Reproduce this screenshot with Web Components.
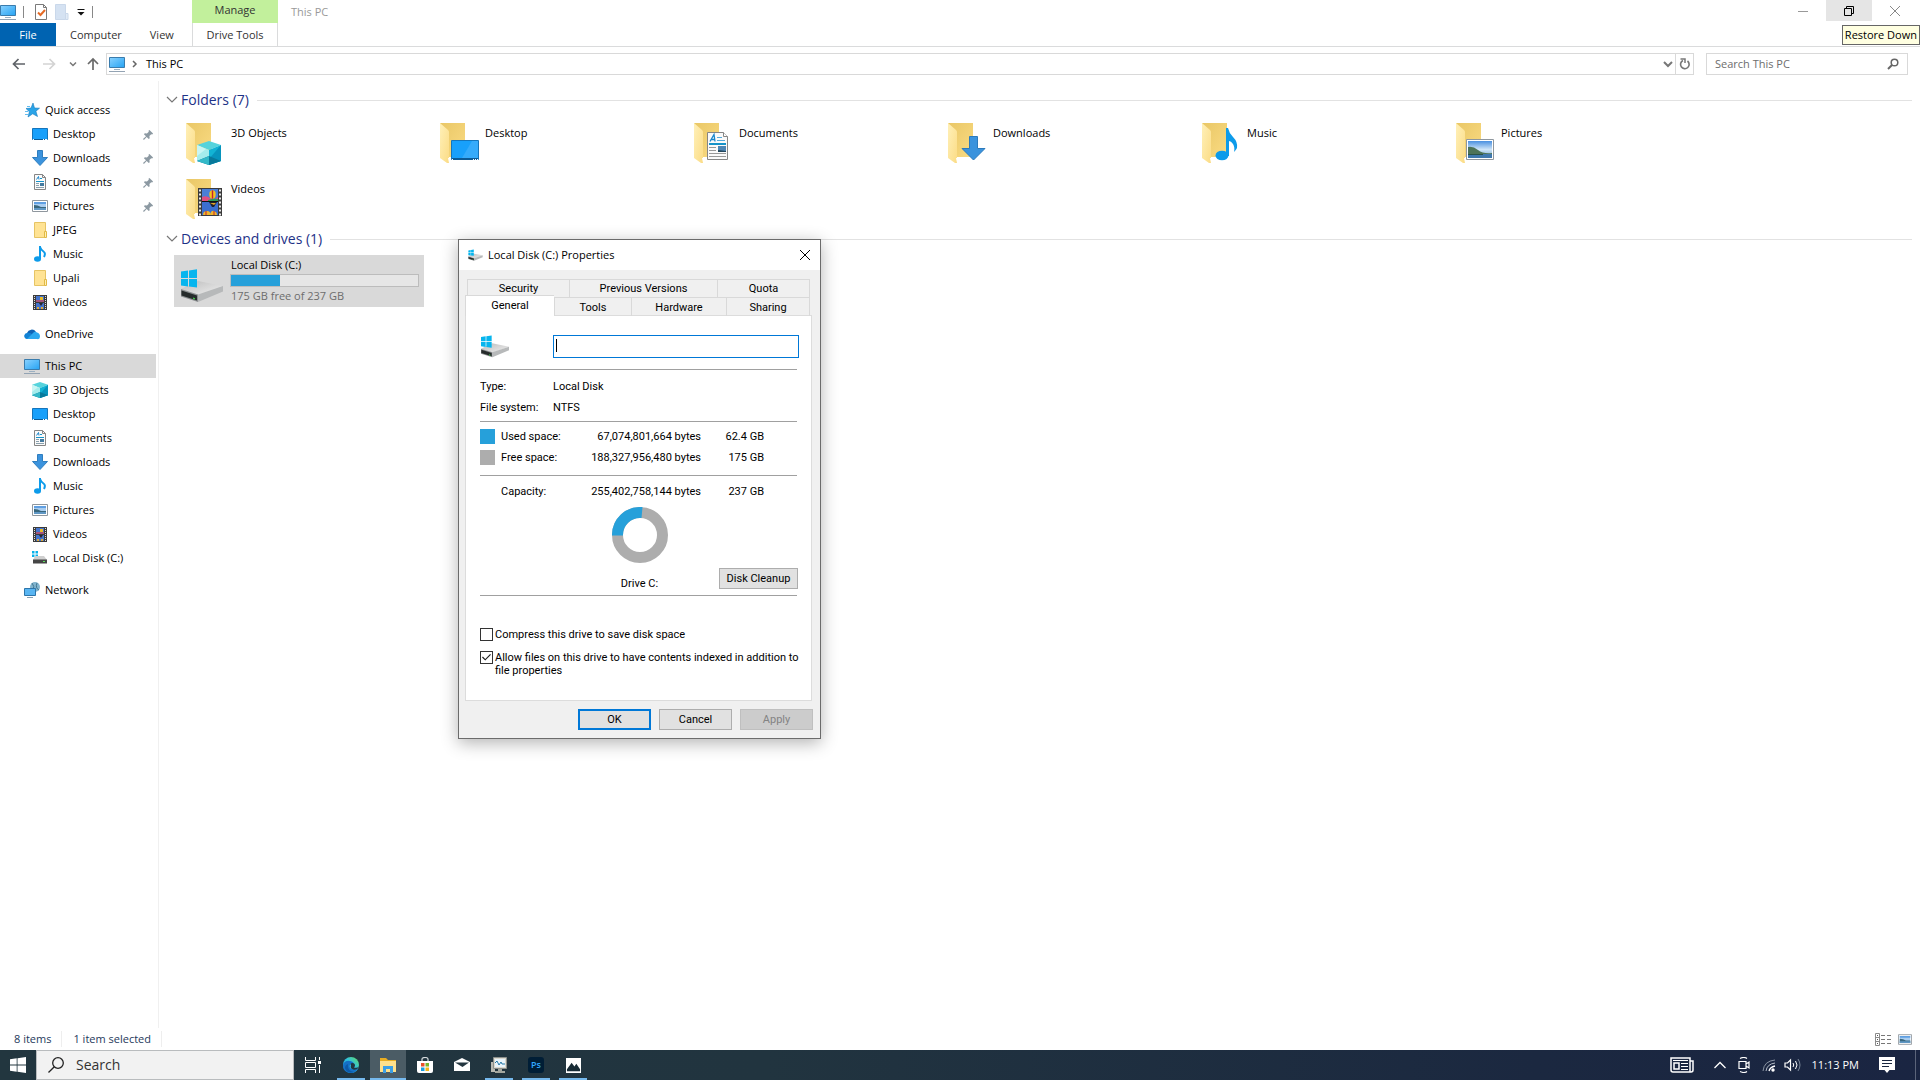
<!DOCTYPE html>
<html lang="en">
<head>
<meta charset="utf-8">
<title>This PC</title>
<style>
    html, body {
        margin: 0;
        min-height: 100vh;
    }

    body {
        display: flex;
        flex-direction: column;
        position: relative;
        background: #fff;
        color: #000;
        font: 11px/16px "Open Sans", "Noto Sans", sans-serif;
    }

    explorer-window {
        flex: 1;
    }

    /* the dialog floats over the desktop */
    properties-dialog {
        position: absolute;
        left: 458px;
        top: 239px;
    }
</style>
</head>
<body>

<explorer-window>
    <nav-pane slot="nav">
        <nav-item icon="star" label="Quick access" root></nav-item>
        <nav-item icon="desktop" label="Desktop" pinned></nav-item>
        <nav-item icon="download" label="Downloads" pinned></nav-item>
        <nav-item icon="document" label="Documents" pinned></nav-item>
        <nav-item icon="picture" label="Pictures" pinned></nav-item>
        <nav-item icon="folder" label="JPEG"></nav-item>
        <nav-item icon="music" label="Music"></nav-item>
        <nav-item icon="folder" label="Upali"></nav-item>
        <nav-item icon="video" label="Videos"></nav-item>
        <nav-item icon="cloud" label="OneDrive" root spaced></nav-item>
        <nav-item icon="pc" label="This PC" root spaced selected></nav-item>
        <nav-item icon="cube" label="3D Objects"></nav-item>
        <nav-item icon="desktop" label="Desktop"></nav-item>
        <nav-item icon="document" label="Documents"></nav-item>
        <nav-item icon="download" label="Downloads"></nav-item>
        <nav-item icon="music" label="Music"></nav-item>
        <nav-item icon="picture" label="Pictures"></nav-item>
        <nav-item icon="video" label="Videos"></nav-item>
        <nav-item icon="disk" label="Local Disk (C:)"></nav-item>
        <nav-item icon="network" label="Network" root spaced></nav-item>
    </nav-pane>

    <tile-group label="Folders (7)">
        <folder-tile icon="big-cube" label="3D Objects"></folder-tile>
        <folder-tile icon="big-desktop" label="Desktop"></folder-tile>
        <folder-tile icon="big-document" label="Documents"></folder-tile>
        <folder-tile icon="big-download" label="Downloads"></folder-tile>
        <folder-tile icon="big-music" label="Music"></folder-tile>
        <folder-tile icon="big-picture" label="Pictures"></folder-tile>
        <folder-tile icon="big-video" label="Videos"></folder-tile>
    </tile-group>
    <tile-group label="Devices and drives (1)">
        <drive-tile label="Local Disk (C:)" free="175 GB free of 237 GB"></drive-tile>
    </tile-group>
</explorer-window>

<task-bar></task-bar>

<properties-dialog label="Local Disk (C:) Properties"></properties-dialog>

<script>
// Folder body shared by all the large tile icons
const folderBack = `
    <linearGradient id="fb" x1="0" y1="0" x2="1" y2="1"><stop offset="0" stop-color="#e9c766"/><stop offset="1" stop-color="#fadb83"/></linearGradient>
    <linearGradient id="ff" x1="0" y1="0" x2="1" y2="1"><stop offset="0" stop-color="#fff0b8"/><stop offset="1" stop-color="#fbdc86"/></linearGradient>
    <path d="M2 2h25v34H10z" fill="url(#fb)"/>
    <path d="M2 2l8 7q1 1 1 2v31l-2 0-7-5z" fill="url(#ff)"/>
    <path d="M10 37h5l-4 5z" fill="#fff"/>`;

const cube = `
    <path d="M0 4L12 0l12 4-12 5z" fill="#56d3dc"/>
    <path d="M0 4l12 5v15L0 20z" fill="#a5ecec"/>
    <path d="M0 4l9 4L0 15z" fill="#c9f6f4"/>
    <path d="M24 4L12 9v15l12-4z" fill="#12b3d4"/>
    <path d="M24 4L12 18v6l12-4z" fill="#0794bd"/>
    <path d="M0 20l12-5 12 5-12 4z" fill="#08799b"/>
    <path d="M0 20l12-5v9z" fill="#34b9c8"/>`;

const film = `
    <path d="M0 0h24v28H0z" fill="#3b3b3b"/>
    <path d="M2 1.500v26M22 1.500v26" stroke="#e8e8e8" stroke-width="2" stroke-dasharray="2 2"/>
    <path d="M4 1h16v12H4z" fill="#4b7fd6"/>
    <path d="M4 9q4-2 8 1t8-1v4H4z" fill="#e0507f"/>
    <path d="M10 12q6-2 10-1v2H10z" fill="#2f9a5a"/>
    <path d="M4 14h16v13H4z" fill="#3b6fd0"/>
    <ellipse cx="14.500" cy="6.500" rx="3.200" ry="4.200" fill="#f6c21c"/>
    <path d="M14.500 2.300v8.400" stroke="#c42331" stroke-width="1.400"/>
    <path d="M11 14h8l-3 5h-2z" fill="#20202a"/>
    <path d="M12 15h6l-2 2z" fill="#e2a728"/>
    <path d="M5 27q0-4 4-4t3 4zM12 27q1-5 4-4t3 4z" fill="#f0b52b"/>
    <path d="M8 27v-4M16 27v-4" stroke="#c42331"/>
    <path d="M4 13.500h16" stroke="#111"/>`;

const photo = `
    <linearGradient id="sky" x1="0" y1="0" x2="0" y2="1"><stop offset="0" stop-color="#4a90e0"/><stop offset=".5" stop-color="#cfe5f8"/><stop offset="1" stop-color="#6ea3cf"/></linearGradient>
    <path d="M.5.5h27v20H.5z" fill="#fff" stroke="#8f979e"/>
    <path d="M2 2h24v17H2z" fill="url(#sky)"/>
    <path d="M2 8q5-1 10 3t14 3v1H2z" fill="#4d7358"/>
    <path d="M2 15h24v4H2z" fill="#3f78ad"/>
    <path d="M2 15h15v1H2z" fill="#2a5247"/>`;

const page = `
    <path d="M.5.500h16l4 4v23H.5z" fill="#fafafa" stroke="#858585"/>
    <path d="M16.500.5v4h4" fill="#fff" stroke="#858585"/>
    <path d="M3 9.500l4-7 1 7M4.500 7.500h3" fill="none" stroke="#1a86cc" stroke-width="1.300"/>
    <path d="M10 5.500h5M10 8.500h8" stroke="#54aadb"/>
    <path d="M2 12h17" stroke="#1593c9" stroke-width="2"/>
    <path d="M2 15.500h7M2 18.500h7M2 21.500h17M2 24.500h17" stroke="#999"/>
    <path d="M11 14h8v6h-8z" fill="#4d86b5"/><path d="M11 18l8 1v1h-8z" fill="#23465b"/>`;

const drive = `
    <linearGradient id="dt" x1="0" y1="0" x2="1" y2="1"><stop offset="0" stop-color="#bcbcbc"/><stop offset="1" stop-color="#f0f0f0"/></linearGradient>
    <path d="M3 34l17-8 25 5-25 9z" fill="url(#dt)"/>
    <path d="M20 39.500L45 31v5.500L20 47z" fill="#b7b9ba"/>
    <path d="M3 34l17 5.500V47L3 41.500z" fill="#8b8e90"/>
    <path d="M3.500 35.500l15.500 5v5L3.500 40.500z" fill="#262b2b"/>
    <path d="M15 42.500l2 .7v1.300l-2-.7z" fill="#41d34b"/>
    <path d="M3 16.500l7-1v7.500H3zM11 15.400l8-1.200V23h-8zM3 24h7v7.500l-7-1zM11 24h8v8.500l-8-1z" fill="#06b5ee"/>`;

const monitor = `
    <linearGradient id="mn" x1="0" y1="0" x2="1" y2="1"><stop offset="0" stop-color="#8ad2ff"/><stop offset="1" stop-color="#25a3f3"/></linearGradient>
    <path d="M.5 1.500h15v10H.5z" fill="url(#mn)" stroke="#3a7cad"/>
    <path d="M5 13.500h6" stroke="#9bb0c2"/>
    <path d="M0 15.500h16" stroke="#93a3b3"/>`;

const smallPhoto = `
    <path d="M.5.500h15v11H.5z" fill="#fff" stroke="#8f979e"/>
    <path d="M2 2h12v8H2z" fill="#a9cdf0"/>
    <path d="M2 2h12v2H2z" fill="#5f9fe2"/>
    <path d="M2 5q4 0 7 2h5v3H2z" fill="#39677d"/>
    <path d="M2 8h12v2H2z" fill="#5f97c4"/>`;

const detailsView = '<path d="M.5.500h4v12h-4zM.5 4.500h4M.5 8.500h4" fill="none" stroke="#8b8b8b"/><path d="M2 2h1v1H2zM2 6h1v1H2zM2 10h1v1H2z" fill="#555"/><path d="M6 2.500h4M12 2.500h4M6 6.500h4M12 6.500h4M6 10.500h4M12 10.500h4" stroke="#777"/>';

// name: [viewBox, markup]
const icons = {
    'pc': ['0 0 16 16', monitor],
    'star': ['0 0 16 16', '<path d="M9 1l1.500 5 5 .2-3.600 3 1.600 5.300-4.800-2.700L4 15l1.400-5.200L2 6.500l5-.4z" fill="#2aa4e8" stroke="#187bbd" stroke-width=".6"/><path d="M3 4.500h3M1 9.500h3M1 12.500h3" stroke="#63bdf0"/>'],
    'desktop': ['0 0 16 16', '<path d="M.5 2.500h15v11H.5z" fill="#18a0fb" stroke="#1575bb"/><path d="M1 13.500h14" stroke="#0b5b97"/><path d="M1 13.500h1M11 13.500h1M13 13.500h2" stroke="#fff"/>'],
    'download': ['0 0 16 16', '<path d="M5.500.5h5v7h5L8 15.500.5 7.500h5z" fill="#3b93dd" stroke="#2f7ebf"/>'],
    'document': ['0 0 16 16', '<path d="M2.500.5h8l3 3v12h-11z" fill="#fafafa" stroke="#858585"/><path d="M10.500.5v3h3" fill="none" stroke="#858585"/><path d="M4.500 5.500l2-3 .5 3" fill="none" stroke="#1a86cc"/><path d="M8 4.500h2M4 7.500h8" stroke="#1593c9"/><path d="M4 9.500h3M4 11.500h3M4 13.500h8" stroke="#8aa0ad"/><path d="M8 9h4v3H8z" fill="#447a9f"/>'],
    'picture': ['0 -2 16 16', smallPhoto],
    'folder': ['0 0 16 16', '<path d="M2.500.5h11v15h-11z" fill="#ffe394" stroke="#e6c464"/><path d="M12.500 9.500h2v6h-2z" fill="#fff0b5" stroke="#e1b946"/>'],
    'music': ['0 0 16 16', '<ellipse cx="5.500" cy="13" rx="3.500" ry="2.700" fill="#0d9bea"/><path d="M8 13V0M8 1q1 3 3.500 4.500T12 11" fill="none" stroke="#0d9bea" stroke-width="2"/>'],
    'video': ['0 0 16 16', '<path d="M1 1h14v15H1z" fill="#3b3b3b"/><path d="M2.500 2v14M13.500 2v14" stroke="#ddd" stroke-dasharray="1 1"/><path d="M4 2h8v6H4zM4 9h8v6H4z" fill="#4574cb"/><path d="M4 6h8v2H4z" fill="#a2557d"/><path d="M8 3h3v3H8z" fill="#e8bb2a"/><path d="M7 9h4l-2 3z" fill="#25252d"/><path d="M5 13h2v2H5zM9 13h2v2H9z" fill="#dba83a"/>'],
    'cube': ['0 0 24 24', cube],
    'cloud': ['0 0 16 16', '<path d="M3 7a5 5 0 0 1 9-1l-4 5H3z" fill="#0f63b5"/><path d="M1 12A3 3 0 0 1 3 7q3-1 6 2l4 4H3q-1.500 0-2-1z" fill="#1282d4"/><path d="M9 7q2-2 4-.5 3 .8 3 4t-3 2.500H3z" fill="#2ba8ef"/>'],
    'disk': ['0 0 16 16', '<path d="M0 1h2.500v2.500H0zM3.500 1H6v2.500H3.500zM0 4.500h2.500V7H0zM3.500 4.500H6V7H3.500z" fill="#08b1ea"/><path d="M3 6h9l3 4H1z" fill="#cfcfcf"/><path d="M1 9.500h14v4H1z" fill="#454545"/><path d="M11 11h2v1h-2z" fill="#5be25b"/>'],
    'network': ['0 0 16 16', '<circle cx="11" cy="5" r="5" fill="#82b4ce"/><path d="M8 1q3 3 1 8M13 1q-2 5 2 7" fill="none" stroke="#417790"/><path d="M.5 6.500h11v7H.5z" fill="#58b5f2" stroke="#2d75aa"/><path d="M3 15.500h6" stroke="#87a0b3"/>'],
    'pin': ['0 0 12 12', '<path d="M7 1l4 4-1 1-1-.3-2 2 .3 2.300-1 1-2.300-2.300L1 12 0 11l3.300-3L1 5.700l1-1 2.300.3 2-2L6 2z" fill="#8c99a2"/>'],

    'big-cube': ['-6 -5 52 52', folderBack + `<g transform="translate(13 20)">${cube}</g>`],
    'big-desktop': ['-6 -5 52 52', folderBack + '<path d="M13.500 19.500h27v19h-27z" fill="#18a0fb" stroke="#1575bb"/><path d="M14 38h26" stroke="#0b5b97" stroke-width="2"/><path d="M24 37l10-17h6v17z" fill="#35abfb"/><path d="M14 38.500h1M35 38.500h1M37 38.500h1M39 38.500h1" stroke="#fff"/>'],
    'big-document': ['-6 -5 52 52', folderBack + `<g transform="translate(15 11)">${page}</g>`],
    'big-download': ['-6 -5 52 52', folderBack + '<path d="M23.500 15.500h8v12h7.500L27.500 39 16 27.500h7.500z" fill="#3b93dd" stroke="#2b7abc"/>'],
    'big-music': ['-6 -5 52 52', folderBack + '<ellipse cx="22" cy="34.500" rx="6.500" ry="4.800" fill="#0d9bea"/><path d="M26 7h2q1 5 5 9 5 5 4 11-1 2-3 4 1-5-1-8-2-3-4-3v15h-3z" fill="#0d9bea"/>'],
    'big-picture': ['-6 -5 52 52', folderBack + `<g transform="translate(12 18)">${photo}</g>`],
    'big-video': ['-6 -5 52 52', folderBack + `<g transform="translate(14 11)">${film}</g>`],
    'big-drive': ['0 0 52 52', drive],
    'drive': ['2 12 44 36', drive],

    'qat-check': ['0 0 12 16', '<path d="M.5.500h8l3 3v12H.5z" fill="#fff" stroke="#7a7a7a"/><path d="M8.500.5v3h3" fill="none" stroke="#7a7a7a"/><path d="M3 8.500l2.500 2.500L10 6" fill="none" stroke="#e56a25" stroke-width="2"/>'],
    'qat-folder': ['0 0 14 16', '<path d="M.5.500h10v15H.5z" fill="#d5e2f2" stroke="#cad8ea"/><path d="M10.500 9.500h2.500v6h-2.500z" fill="#e2ebf6" stroke="#cad8ea"/>'],
    'qat-more': ['0 0 8 8', '<path d="M.5 1.500h7" stroke="#111"/><path d="M.5 4h7L4 7.500z" fill="#111"/>'],
    'back': ['0 0 14 12', '<path d="M13 6H2M6.500 1L1.500 6l5 5" fill="none" stroke="#5f6368" stroke-width="1.700"/>'],
    'forward': ['0 0 14 12', '<path d="M1 6h11M7.500 1l5 5-5 5" fill="none" stroke="#d3d3d3" stroke-width="1.700"/>'],
    'up': ['0 0 12 14', '<path d="M6 13V2M1 7l5-5 5 5" fill="none" stroke="#6a6a6a" stroke-width="1.700"/>'],
    'small-down': ['0 0 8 6', '<path d="M1 1.500l3 3 3-3" fill="none" stroke="#777" stroke-width="1.500"/>'],
    'crumb': ['0 0 6 8', '<path d="M1 1l3 3-3 3" fill="none" stroke="#666" stroke-width="1.500"/>'],
    'box-down': ['0 0 10 8', '<path d="M1 2l4 4 4-4" fill="none" stroke="#777" stroke-width="2"/>'],
    'refresh': ['0 0 12 12', '<path d="M4 2.500A4.300 4.300 0 1 0 8.500 3" fill="none" stroke="#777" stroke-width="1.600"/><path d="M1.500 1H6v4" fill="none" stroke="#777" stroke-width="1.500"/>'],
    'find': ['0 0 12 12', '<circle cx="7.500" cy="4.500" r="3.300" fill="none" stroke="#666" stroke-width="1.500"/><path d="M5 7l-4 4" stroke="#666" stroke-width="2"/>'],
    'group-down': ['0 0 12 8', '<path d="M1 1l5 5 5-5" fill="none" stroke="#777" stroke-width="1.200"/>'],
    'minimize': ['0 0 10 10', '<path d="M0 5.500h10" stroke="#999"/>'],
    'restore': ['0 0 10 10', '<path d="M.5 2.500h7v7h-7zM2.500 2.500v-2h7v7h-2" fill="none" stroke="#000"/>'],
    'close': ['0 0 10 10', '<path d="M0 0l10 10M10 0L0 10" stroke="currentColor"/>'],
    'details-view': ['0 0 17 13', detailsView],
    'tiles-view': ['0 0 16 12', smallPhoto],

    'windows': ['0 0 16 16', '<path d="M0 2.300l6.700-1v6.300H0zM7.500 1.200L16 0v7.600H7.500zM0 8.400h6.700v6.300l-6.700-1zM7.500 8.400H16V16l-8.500-1.200z" fill="#fff"/>'],
    'search': ['0 0 16 16', '<circle cx="10" cy="6" r="5.300" fill="none" stroke="#222" stroke-width="1.300"/><path d="M6.300 9.700L.5 15.500" stroke="#222" stroke-width="1.300"/>'],
    'task-view': ['0 0 16 16', '<path d="M.5 0v3.500h10V0M.5 16v-3.500h10V16M.5 5.500h10v5H.5zM14.500 0v3M14.500 8v8" fill="none" stroke="#fff"/><path d="M13 4h3v3h-3z" fill="#fff"/>'],
    'edge': ['0 0 16 16', '<linearGradient id="eg" x1="0" y1="1" x2="1" y2="0"><stop offset="0" stop-color="#1683d8"/><stop offset=".55" stop-color="#2fc2df"/><stop offset="1" stop-color="#65df63"/></linearGradient><circle cx="8" cy="8" r="8" fill="url(#eg)"/><path d="M0 8q2-5 7-4 4 .5 4 4-4-2-4.500 1 0 3 4 3.500 3 0 5-1.500-3 5-8 5-8-1-7.500-8z" fill="#1570c6"/><path d="M5 7q-1 7 6 8-7 2-9-4 0-3 3-4z" fill="#0d5aa7"/><path d="M8 8q-1-2 1.500-2T12 8.500q0 1-1 2 3 1 5-1-2 4-6 3-3-1-2-4.500z" fill="#233640"/>'],
    'explorer': ['0 0 16 16', '<path d="M0 1h6l2 2h8v12H0z" fill="#e9ad22"/><path d="M0 4h16v11H0z" fill="#ffe08b"/><path d="M3 16V9h10v7h-3v-4H6v4z" fill="#3c9fe5"/>'],
    'store': ['0 0 16 16', '<path d="M5 5V2q0-1.500 3-1.500T11 2v3" fill="none" stroke="#d7dcdf" stroke-width="1.200"/><path d="M0 4h16v10q0 2-2 2H2q-2 0-2-2z" fill="#fff"/><path d="M4 6h3.500v3.500H4z" fill="#e9502b"/><path d="M8.500 6H12v3.500H8.500z" fill="#78b62b"/><path d="M4 10.500h3.500V14H4z" fill="#1ba0e1"/><path d="M8.500 10.500H12V14H8.500z" fill="#f5b61b"/>'],
    'mail': ['0 0 16 16', '<path d="M0 5l8-4 8 4v9H0z" fill="#fff"/><path d="M1 5.500h14L8.500 10z" fill="#233640"/>'],
    'monitor-app': ['0 0 16 16', '<path d="M0 5h4v10H0z" fill="#b9bab2"/><path d="M2.500.5h13v11h-13z" fill="#dbdad0" stroke="#8d908c"/><path d="M4 2h10v8H4z" fill="#eaf5fb"/><path d="M4 6l2-2 2 4 2-3 1 2h3" fill="none" stroke="#2478a8"/><path d="M7 12h4v2H7zM4 14h10v2H4z" fill="#a4a79f"/>'],
    'photos': ['0 0 16 16', '<path d="M0 0h16v16H0z" fill="#fff"/><path d="M1 12l5-7 3 4 2-3 4 6v2H1z" fill="#172b35"/>'],
    'news': ['0 0 24 16', '<path d="M1 1h19v14H3q-2 0-2-2zM20 4h3v9q0 2-2 2h-2" fill="none" stroke="#fff" stroke-width="1.500"/><path d="M4 6h5v6H4z" fill="none" stroke="#fff" stroke-width="1.500"/><path d="M3 3.500h15M11 6.500h7M11 9.500h7M11 12.500h7" stroke="#fff"/>'],
    'tray-up': ['0 0 12 8', '<path d="M.5 7L6 1.500 11.500 7" fill="none" stroke="#fff" stroke-width="1.300"/>'],
    'meet': ['0 0 12 16', '<path d="M1 4.500h7v7H1zM8 7l3-2v6L8 9M2 1.500q4-2 7 0M2 14.500q4 2 7 0" fill="none" stroke="#fff" stroke-width="1.200"/>'],
    'wifi': ['0 0 14 14', '<path d="M1 13Q2 3 13 2" fill="none" stroke="#8c96a5"/><path d="M4 13q1-7 9-8" fill="none" stroke="#b6bdc8"/><path d="M7 13q1-4 6-5" fill="none" stroke="#fff" stroke-width="1.300"/><circle cx="11" cy="12" r="1.700" fill="#fff"/>'],
    'sound': ['0 0 18 14', '<path d="M1 5h2.500l3-3v10l-3-3H1z" fill="none" stroke="#fff" stroke-width="1.200"/><path d="M9 5q1.500 2 0 4M11.500 3q3 4 0 8" fill="none" stroke="#fff"/><path d="M14 1q4 6 0 12" fill="none" stroke="#7a879a"/>'],
    'notes': ['0 0 16 16', '<path d="M0 0h16v13h-5.500L8 16l-2.500-3H0z" fill="#fff"/><path d="M3 3.500h10M3 6.500h10M3 9.500h7" stroke="#1b2840"/>']
};

const icon = (name, width, height = width) =>
    `<svg class="icon-${name}" width="${width}" height="${height}" viewBox="${icons[name][0]}" aria-hidden="true">${icons[name][1]}</svg>`;

const baseStyle = `
    * { box-sizing: border-box; }
    svg { display: block; flex: none; }
    button, input { font: inherit; color: inherit; margin: 0; border-radius: 0; }
    button { border: 0; padding: 0; background: none; }
    a { color: inherit; text-decoration: none; }
`;

class BaseElement extends HTMLElement {
    constructor() {
        super();
        this.attachShadow({ mode: 'open' });
    }

    connectedCallback() {
        this.shadowRoot.innerHTML = `<style>${baseStyle}${this.styles()}</style>${this.render()}`;
    }
}

// Window frame: title bar, ribbon tabs, address bar, panes, status bar
class ExplorerWindow extends BaseElement {
    styles() {
        return `
            :host { display: flex; flex-direction: column; position: relative; }
            header { display: flex; height: 46px; border-bottom: 1px solid #dadbdc; box-sizing: content-box; }
            .left { width: 192px; }
            .quick { display: flex; align-items: center; height: 23px; }
            .quick i { width: 1px; height: 12px; margin-left: 7px; background: #888; }
            .quick button { margin-left: 8px; }
            .quick button:first-child { margin-left: 0; }
            .quick i + button { margin-left: 11px; }
            .ribbon { display: flex; height: 23px; color: #333; }
            .ribbon button { padding: 0 14px; }
            .ribbon .file { width: 56px; background: #0063b1; color: #fff; }
            .context { width: 86px; color: #333; }
            .context span, .context button { display: block; width: 100%; height: 23px; line-height: 22px; text-align: center; }
            .context span { background: #c2f09c; line-height: 20px; }
            .context button { border: solid #dadbdc; border-width: 0 1px; }
            h1 { flex: 1; margin: 0; padding: 4px 13px; font: inherit; color: #999; }
            .controls { display: flex; margin-right: 2px; }
            .controls button { display: grid; place-items: center; width: 46px; height: 21px; color: #888; }
            .controls .hot { background: #e5e5e5; }
            .tip { position: absolute; right: 0; top: 25px; padding: 1px 2px; border: 1px solid #666; background: #ffffe1; white-space: nowrap; }
            .address { display: flex; align-items: center; height: 34px; padding-right: 12px; }
            .moves { display: flex; align-items: center; width: 106px; padding-left: 12px; }
            .moves button + button { margin-left: 16px; }
            .moves button:nth-child(3) { margin-left: 13px; }
            .moves button:nth-child(4) { margin-left: 10px; }
            .path { display: flex; flex: 1; align-items: center; height: 22px; padding-left: 2px; border: 1px solid #d9d9d9; }
            .icon-crumb { margin: 0 8px 0 7px; }
            .path a { flex: 1; }
            .path > button:last-child { display: grid; place-items: center; width: 18px; height: 20px; margin-left: 2px; border-left: 1px solid #d9d9d9; }
            .find { display: flex; align-items: center; width: 202px; height: 22px; margin-left: 12px; padding: 0 8px; border: 1px solid #d9d9d9; }
            .find input { flex: 1; min-width: 0; padding: 0; border: 0; outline: 0; background: none; }
            .find input::placeholder { color: #6d6d6d; opacity: 1; }
            .panes { display: flex; flex: 1; }
            ::slotted(nav-pane) { width: 159px; flex: none; }
            main { flex: 1; min-width: 0; padding: 8px 8px 0 7px; }
            footer { display: flex; align-items: center; height: 22px; padding: 0 8px 0 14px; color: #1e395b; }
            footer span { padding-right: 10px; margin-right: 11px; border-right: 1px solid #eee; }
            footer div { flex: 1; }
            footer button + button { margin-left: 6px; }
        `;
    }

    render() {
        return `
            <header>
                <div class="left">
                    <div class="quick">
                        <button aria-label="This PC">${icon('pc', 16)}</button><i></i>
                        <button aria-label="Properties">${icon('qat-check', 12, 16)}</button>
                        <button aria-label="New folder">${icon('qat-folder', 14, 16)}</button>
                        <button aria-label="Customize">${icon('qat-more', 8)}</button><i></i>
                    </div>
                    <div class="ribbon">
                        <button class="file">File</button>
                        <button>Computer</button>
                        <button>View</button>
                    </div>
                </div>
                <div class="context"><span>Manage</span><button>Drive Tools</button></div>
                <h1>This PC</h1>
                <div class="controls">
                    <button aria-label="Minimize">${icon('minimize', 10)}</button>
                    <button class="hot" aria-label="Restore">${icon('restore', 10)}</button>
                    <button aria-label="Close">${icon('close', 10)}</button>
                </div>
            </header>
            <div class="tip" role="tooltip">Restore Down</div>
            <div class="address">
                <div class="moves">
                    <button aria-label="Back">${icon('back', 14, 12)}</button>
                    <button aria-label="Forward">${icon('forward', 14, 12)}</button>
                    <button aria-label="Recent">${icon('small-down', 8, 6)}</button>
                    <button aria-label="Up">${icon('up', 12, 14)}</button>
                </div>
                <div class="path">
                    ${icon('pc', 16)}${icon('crumb', 6, 8)}<a href="#this-pc">This PC</a>
                    <button aria-label="Previous locations">${icon('box-down', 10, 8)}</button>
                    <button aria-label="Refresh">${icon('refresh', 12)}</button>
                </div>
                <label class="find"><input type="text" placeholder="Search This PC" aria-label="Search This PC">${icon('find', 12)}</label>
            </div>
            <div class="panes">
                <slot name="nav"></slot>
                <main><slot></slot></main>
            </div>
            <footer>
                <span>8 items</span><span>1 item selected</span><div></div>
                <button aria-label="Details view">${icon('details-view', 17, 13)}</button>
                <button aria-label="Tiles view">${icon('tiles-view', 14, 11)}</button>
            </footer>
        `;
    }
}

class NavPane extends BaseElement {
    styles() {
        return `
            :host { display: block; padding: 17px 2px 0 0; border-right: 1px solid #f0f0f0; box-sizing: border-box; }
        `;
    }

    render() {
        return '<nav aria-label="Folders"><slot></slot></nav>';
    }
}

class NavItem extends BaseElement {
    styles() {
        return `
            :host { display: block; }
            :host([spaced]) { margin-top: 8px; }
            :host([selected]) { background: #d9d9d9; }
            a { display: flex; align-items: center; height: 24px; padding: 0 2px 0 32px; gap: 5px; }
            :host([root]) a { padding-left: 24px; }
            span { flex: 1; }
        `;
    }

    render() {
        const pin = this.hasAttribute('pinned') ? icon('pin', 11) : '';
        return `<a href="#">${icon(this.getAttribute('icon'), 16)}<span>${this.getAttribute('label')}</span>${pin}</a>`;
    }
}

class TileGroup extends BaseElement {
    styles() {
        return `
            :host { display: block; margin-bottom: 4px; }
            h2 { display: flex; align-items: center; margin: 0 0 5px; font-size: 14px; line-height: 22px; font-weight: 400; color: #1e3287; }
            h2 svg { margin-right: 3px; }
            h2::after { content: ""; flex: 1; height: 1px; margin-left: 8px; background: #e2e2e2; }
            .tiles { display: grid; grid-template-columns: repeat(auto-fill, 250px); gap: 4px; padding-left: 8px; }
        `;
    }

    render() {
        return `
            <h2>${icon('group-down', 12, 8)}${this.getAttribute('label')}</h2>
            <div class="tiles"><slot></slot></div>
        `;
    }
}

class FolderTile extends BaseElement {
    styles() {
        return `
            :host { display: block; }
            a { display: flex; height: 52px; padding-left: 4px; }
            span { padding: 9px 0 0 1px; }
        `;
    }

    render() {
        return `<a href="#">${icon(this.getAttribute('icon'), 52)}<span>${this.getAttribute('label')}</span></a>`;
    }
}

class DriveTile extends BaseElement {
    styles() {
        return `
            :host { display: block; background: #d9d9d9; }
            a { display: flex; height: 52px; padding: 0 5px 0 4px; }
            .info { flex: 1; padding-top: 2px; }
            .info span { display: block; padding-left: 1px; }
            .bar { height: 13px; margin: 1px 0; border: 1px solid #bcbcbc; background: #e6e6e6; }
            .bar i { display: block; width: 26%; height: 100%; background: #26a0da; }
            .free { color: #6d6d6d; }
        `;
    }

    render() {
        return `
            <a href="#">${icon('big-drive', 52)}
                <div class="info">
                    <span>${this.getAttribute('label')}</span>
                    <div class="bar"><i></i></div>
                    <span class="free">${this.getAttribute('free')}</span>
                </div>
            </a>
        `;
    }
}

class PropertiesDialog extends BaseElement {
    styles() {
        return `
            :host {
                display: block; width: 363px; box-sizing: border-box; border: 1px solid #6b6b6b; background: #f0f0f0;
                box-shadow: 0 4px 16px rgba(0, 0, 0, .3);
            }
            .title { display: flex; align-items: center; height: 30px; padding: 0 10px 0 9px; background: #fff; }
            .title h2 { flex: 1; margin: 0 0 0 5px; font: inherit; }
            .body { padding: 9px 7px 8px 6px; font: 11px/13px Roboto, "Liberation Sans", sans-serif; }
            .tabs { display: grid; height: 18px; margin: 0 3px 0 2px; }
            .tabs button { border: solid #d9d9d9; border-width: 1px 0 0 1px; }
            .tabs button:last-child { border-right-width: 1px; }
            .first { grid-template-columns: 102fr 148fr 93fr; }
            .second { grid-template-columns: 89fr 77fr 95fr 84fr; margin-left: 0; }
            .tabs .active { height: 21px; margin-top: -2px; padding-bottom: 1px; background: #fff; position: relative; }
            .panel { margin-right: 1px; padding: 18px 12px 23px 14px; border: 1px solid #dcdcdc; background: #fff; }
            .name { display: grid; grid-template-columns: 73px 1fr; align-items: center; }
            .name input {
                height: 23px; width: 100%; padding: 0 4px; border: 1px solid #0078d7; outline: 0;
                background: linear-gradient(#000, #000) 2px 3px / 1px 13px no-repeat #fff;
            }
            hr { height: 1px; margin: 0 2px 0 0; border: 0; background: #a0a0a0; }
            .name + hr { margin-top: 11px; }
            dl { display: grid; grid-template-columns: 73px 1fr; margin: 6px 0 3px; line-height: 21px; }
            dd { margin: 0; }
            table { width: 284px; margin: 4px 0 7px; border-collapse: collapse; table-layout: fixed; line-height: 21px; white-space: nowrap; }
            table.total { margin: 5px 0; }
            th, td { height: 21px; padding: 0; font-weight: 400; text-align: right; }
            th { width: 80px; text-align: left; }
            .swatch { width: 21px; }
            .swatch i { display: block; width: 15px; height: 15px; }
            .gb { width: 63px; }
            .used { background: #26a0da; }
            .unused { background: #adadad; }
            .chart { display: grid; grid-template-columns: 1fr auto 1fr; align-items: end; margin-bottom: 3px; }
            figure { grid-column: 2; margin: 0; text-align: center; }
            figure svg { margin: 0 auto 13px; }
            figcaption { line-height: 16px; }
            .push { height: 21px; border: 1px solid #adadad; background: #e1e1e1; }
            .chart .push { width: 79px; margin: 0 1px 3px 0; justify-self: end; }
            .check { display: flex; gap: 2px; margin-top: 10px; }
            hr + .check { margin-top: 32px; }
            .check input { appearance: none; flex: none; display: grid; place-items: center; width: 13px; height: 13px; border: 1px solid #333; background: #fff; }
            .check input:checked::after {
                content: ""; width: 9px; height: 9px; background: #222;
                clip-path: polygon(0 50%, 10% 40%, 36% 66%, 90% 10%, 100% 20%, 36% 84%);
            }
            .actions { display: flex; justify-content: flex-end; gap: 8px; margin-top: 8px; }
            .actions .push { width: 73px; }
            .actions .ok { border: 2px solid #0078d7; }
            .actions .push:disabled { border-color: #bfbfbf; background: #ccc; color: #838383; }
        `;
    }

    render() {
        return `
            <div class="title">${icon('drive', 15, 14)}<h2>${this.getAttribute('label')}</h2><button aria-label="Close">${icon('close', 10)}</button></div>
            <div class="body">
                <div class="tabs first"><button>Security</button><button>Previous Versions</button><button>Quota</button></div>
                <div class="tabs second"><button class="active">General</button><button>Tools</button><button>Hardware</button><button>Sharing</button></div>
                <div class="panel">
                    <div class="name">${icon('drive', 30, 24)}<input type="text" aria-label="Volume label"></div>
                    <hr>
                    <dl><dt>Type:</dt><dd>Local Disk</dd><dt>File system:</dt><dd>NTFS</dd></dl>
                    <hr>
                    <table>
                        <tr><td class="swatch"><i class="used"></i></td><th>Used space:</th><td>67,074,801,664 bytes</td><td class="gb">62.4 GB</td></tr>
                        <tr><td class="swatch"><i class="unused"></i></td><th>Free space:</th><td>188,327,956,480 bytes</td><td class="gb">175 GB</td></tr>
                    </table>
                    <hr>
                    <table class="total">
                        <tr><td class="swatch"></td><th>Capacity:</th><td>255,402,758,144 bytes</td><td class="gb">237 GB</td></tr>
                    </table>
                    <div class="chart">
                        <figure>
                            <svg width="56" height="56" viewBox="0 0 56 56" aria-hidden="true">
                                <circle cx="28" cy="28" r="22.500" fill="none" stroke="#adadad" stroke-width="11"/>
                                <path d="M5.500 28.500A22.500 22.500 0 0 1 30 5.600" fill="none" stroke="#26a0da" stroke-width="11"/>
                            </svg>
                            <figcaption>Drive C:</figcaption>
                        </figure>
                        <button class="push">Disk Cleanup</button>
                    </div>
                    <hr>
                    <label class="check"><input type="checkbox">Compress this drive to save disk space</label>
                    <label class="check"><input type="checkbox" checked>Allow files on this drive to have contents indexed in addition to file properties</label>
                </div>
                <div class="actions">
                    <button class="push ok">OK</button><button class="push">Cancel</button><button class="push" disabled>Apply</button>
                </div>
            </div>
        `;
    }
}

class TaskBar extends BaseElement {
    styles() {
        return `
            :host { display: flex; height: 30px; color: #fff; background: linear-gradient(90deg, #22363f, #21343f 40%, #1b2840 80%, #1a2542); }
            button { display: grid; place-items: center; }
            .start { width: 36px; }
            .search { display: flex; align-items: center; gap: 12px; width: 258px; padding-left: 11px; border: 1px solid #b9bcbe; background: #f2f2f2; }
            .search input { flex: 1; min-width: 0; padding: 0; border: 0; outline: 0; background: none; font-size: 14px; }
            .search input::placeholder { color: #333; opacity: 1; }
            .apps { display: flex; flex: 1; gap: 1px; }
            .apps button { position: relative; width: 36px; }
            .apps button:first-child { width: 38px; }
            .apps .open::after { content: ""; position: absolute; left: 4px; right: 4px; bottom: 0; height: 2px; background: #76b9ed; }
            .apps .current { background: #4b5c65; }
            .apps .current::after { left: 0; right: 0; }
            .ps { width: 16px; height: 16px; border-radius: 3px; background: #001e36; color: #31a8ff; font-size: 9px; font-weight: 600; line-height: 15px; }
            .tray { display: flex; align-items: center; }
            .tray button { margin-right: 12px; }
            .tray .wide { margin-right: 20px; }
            .tray .near { margin-right: 8px; }
            .tray .mid { margin-right: 10px; }
            .end { width: 5px; height: 30px; border-left: 1px solid #5b647a; margin-left: 8px; }
        `;
    }

    render() {
        return `
            <button class="start" aria-label="Start">${icon('windows', 16)}</button>
            <label class="search">${icon('search', 16)}<input type="text" placeholder="Search" aria-label="Search"></label>
            <div class="apps">
                <button aria-label="Task view">${icon('task-view', 16)}</button>
                <button class="open" aria-label="Edge">${icon('edge', 16)}</button>
                <button class="open current" aria-label="File Explorer">${icon('explorer', 16)}</button>
                <button aria-label="Store">${icon('store', 16)}</button>
                <button aria-label="Mail">${icon('mail', 16)}</button>
                <button class="open" aria-label="Performance">${icon('monitor-app', 16)}</button>
                <button class="open" aria-label="Photoshop"><span class="ps">Ps</span></button>
                <button class="open" aria-label="Photos">${icon('photos', 15)}</button>
            </div>
            <div class="tray">
                <button class="wide" aria-label="News">${icon('news', 24, 16)}</button>
                <button aria-label="Show hidden icons">${icon('tray-up', 12, 8)}</button>
                <button aria-label="Meet now">${icon('meet', 12, 16)}</button>
                <button class="near" aria-label="Network">${icon('wifi', 14)}</button>
                <button class="mid" aria-label="Volume">${icon('sound', 18, 14)}</button>
                <button class="wide">11:13 PM</button>
                <button aria-label="Notifications">${icon('notes', 16)}</button>
                <div class="end"></div>
            </div>
        `;
    }
}

customElements.define('explorer-window', ExplorerWindow);
customElements.define('nav-pane', NavPane);
customElements.define('nav-item', NavItem);
customElements.define('tile-group', TileGroup);
customElements.define('folder-tile', FolderTile);
customElements.define('drive-tile', DriveTile);
customElements.define('properties-dialog', PropertiesDialog);
customElements.define('task-bar', TaskBar);
</script>
</body>
</html>
